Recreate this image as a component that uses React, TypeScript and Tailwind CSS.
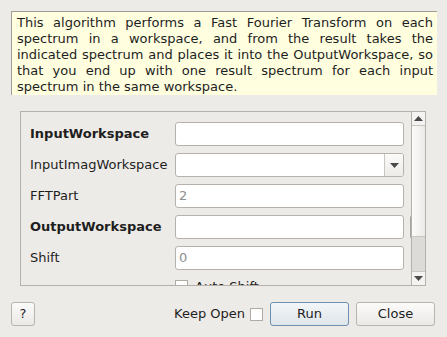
import React from 'react'

const font = { fontFamily: '"DejaVu Sans", "Liberation Sans", sans-serif' }

function Field({ value, combo }: { value?: string; combo?: boolean }) {
  return (
    <div className="flex h-[24px] w-[229px] shrink-0 items-center overflow-hidden rounded-[3px] border border-[#b6b2ab] bg-white">
      <span className="flex-1 pl-[3px] text-[13px] text-[#8e8e8e]">{value}</span>
      {combo && (
        <div className="flex h-full w-[19px] items-center justify-center border-l border-[#c9c6c0] bg-gradient-to-b from-[#fbfbfa] to-[#ecebe8]">
          <svg width="9" height="5" viewBox="0 0 9 5">
            <path d="M0 0h9L4.5 5z" fill="#4a4a4a" />
          </svg>
        </div>
      )}
    </div>
  )
}

function Row({ label, bold, children }: { label: string; bold?: boolean; children: React.ReactNode }) {
  return (
    <div className="flex h-[24px] shrink-0 items-center">
      <span className={`w-[145px] shrink-0 whitespace-nowrap text-[13px] text-[#1e1e1e] ${bold ? 'font-bold' : ''}`}>
        {label}
      </span>
      {children}
    </div>
  )
}

function Button({ children, primary, className }: { children: React.ReactNode; primary?: boolean; className?: string }) {
  return (
    <div
      className={`flex h-[24px] items-center justify-center rounded-[3px] border text-[13px] text-[#1e1e1e] ${
        primary
          ? 'border-[#6d8fb0] bg-gradient-to-b from-[#f3f6f8] to-[#dfe5ea]'
          : 'border-[#b8b4ae] bg-gradient-to-b from-[#fbfbfa] to-[#ebe9e6]'
      } ${className ?? ''}`}
    >
      {children}
    </div>
  )
}

export default function App() {
  return (
    <div className="flex h-[337px] w-[447px] flex-col bg-[#edebe7] pt-[11px]" style={font}>
      {/* description */}
      <div className="ml-[11px] h-[84px] w-[426px] shrink-0 border-l border-t border-[#a19d96] bg-[#ffffe0] pl-[5px] pr-[4px] pt-[3px] text-justify text-[13px] leading-[16px] text-[#1e1e1e]">
        This algorithm performs a Fast Fourier Transform on each spectrum in a workspace, and from the result takes the
        indicated spectrum and places it into the OutputWorkspace, so that you end up with one result spectrum for each
        input spectrum in the same workspace.
      </div>

      {/* property panel */}
      <div className="ml-[20px] mt-[16px] flex h-[175px] w-[406px] shrink-0 border border-[#b5b1aa]">
        <div className="relative flex flex-1 flex-col gap-[7px] overflow-hidden pl-[9px] pt-[10px]">
          <Row label="InputWorkspace" bold>
            <Field />
          </Row>
          <Row label="InputImagWorkspace">
            <Field combo />
          </Row>
          <Row label="FFTPart">
            <Field value="2" />
          </Row>
          <Row label="OutputWorkspace" bold>
            <Field />
            <div className="ml-[6px] h-[24px] w-[6px] shrink-0 rounded-l-[3px] border border-r-0 border-[#a8a49e] bg-[#f6f5f3]" />
          </Row>
          <Row label="Shift">
            <Field value="0" />
          </Row>
          <div className="flex shrink-0 items-center pl-[145px]">
            <div className="h-[13px] w-[13px] shrink-0 border border-[#b0aca5] bg-white" />
            <span className="ml-[7px] whitespace-nowrap text-[13px] text-[#1e1e1e]">Auto Shift</span>
          </div>
        </div>

        {/* scrollbar */}
        <div className="flex w-[14px] shrink-0 flex-col border-l border-[#b5b1aa]">
          <div className="flex h-[14px] items-center justify-center border-b border-[#c9c6c0] bg-[#f4f3f1]">
            <svg width="9" height="5" viewBox="0 0 9 5">
              <path d="M0 5h9L4.5 0z" fill="#4a4a4a" />
            </svg>
          </div>
          <div className="h-[111px] border-b border-[#c9c6c0] bg-gradient-to-r from-[#fbfbfa] to-[#eceae7]" />
          <div className="flex-1 bg-[#dddbd7]" />
          <div className="flex h-[14px] items-center justify-center border-t border-[#c9c6c0] bg-[#f4f3f1]">
            <svg width="9" height="5" viewBox="0 0 9 5">
              <path d="M0 0h9L4.5 5z" fill="#4a4a4a" />
            </svg>
          </div>
        </div>
      </div>

      {/* buttons */}
      <div className="mt-[15px] flex items-center pl-[11px] pr-[12px] pt-[1px]">
        <Button className="w-[24px]">?</Button>
        <div className="flex-1" />
        <span className="text-[13px] text-[#1e1e1e]">Keep Open</span>
        <div className="ml-[5px] h-[13px] w-[13px] border border-[#b0aca5] bg-white" />
        <Button primary className="ml-[7px] w-[79px]">
          Run
        </Button>
        <Button className="ml-[7px] w-[79px]">Close</Button>
      </div>
    </div>
  )
}
